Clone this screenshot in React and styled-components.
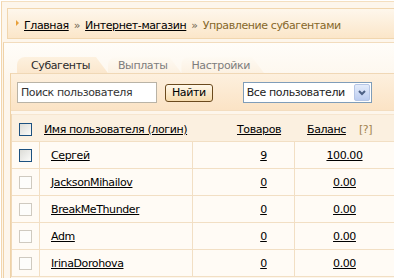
import React from "react";
import styled, { createGlobalStyle } from "styled-components";

const Global = createGlobalStyle`
  html, body { margin: 0; padding: 0; background: #fff; }
  body { font-family: "DejaVu Sans", Verdana, sans-serif; font-size: 11px; letter-spacing: -0.4px; color: #000; white-space: nowrap; }
`;

const Frame = styled.div`
  width: 394px;
  height: 278px;
  overflow: hidden;
  box-sizing: border-box;
  padding: 1px 0 0 1px;
  background: #fff;
`;

const Outer = styled.div`
  height: 100%;
  box-sizing: border-box;
  border-left: 1px solid #f2d6ae;
  border-top: 1px solid #f4dfc0;
  background: #fdf6ec;
  padding: 6px 0 0 1px;
  display: flex;
  flex-direction: column;
`;

const Breadcrumb = styled.div`
  margin-left: 4px;
  height: 31px;
  box-sizing: border-box;
  border: 1px solid #f1d6ae;
  border-right: none;
  background: linear-gradient(#fef7ec, #fbe6c9);
  display: flex;
  align-items: center;
  padding: 3px 0 0 8px;
`;

const Bullet = styled.span`
  width: 0;
  height: 0;
  border-left: 3px solid #e8a03a;
  border-top: 3px solid transparent;
  border-bottom: 3px solid transparent;
  margin-right: 5px;
  margin-top: -4px;
`;

const CrumbLink = styled.a`
  color: #000;
  text-decoration: underline;
`;

const Sep = styled.span`
  color: #6f6450;
  margin: 0 5px;
`;

const Current = styled.span`
  color: #86682a;
`;

const Panel = styled.div`
  margin-top: 3px;
  flex: 1;
  border-left: 1px solid #f0d3a8;
  border-top: 1px solid #f2dcbd;
  background: linear-gradient(#fffdf9, #fdf6ec 40px);
  padding: 14px 0 0 6px;
  display: flex;
  flex-direction: column;
`;

const Tabs = styled.div`
  display: flex;
  align-items: flex-end;
  height: 16px;
  padding-left: 7px;
`;

const Tab = styled.div`
  height: 16px;
  box-sizing: border-box;
  padding: 0 ${(p) => (p.$active ? "18px" : "14px")} 0 ${(p) => (p.$active ? "14px" : "10px")};
  display: flex;
  align-items: center;
  color: ${(p) => (p.$active ? "#2a2a2a" : "#7d7d7d")};
  background: ${(p) => (p.$active ? "linear-gradient(#fdf1df, #fbe7cd)" : "linear-gradient(#fefaf3, #fcf1e2)")};
  border-top-left-radius: 8px;
  clip-path: polygon(0 0, calc(100% - 12px) 0, 100% 100%, 0 100%);
`;

const Content = styled.div`
  flex: 1;
  border-left: 1px solid #efd2a6;
  border-top: 1px solid #f0d8b6;
  background: #fdf6ec;
  display: flex;
  flex-direction: column;
`;

const Toolbar = styled.div`
  height: 37px;
  box-sizing: border-box;
  border-bottom: 1px solid #f3ddbf;
  background: linear-gradient(#fdf0de, #fbe3c5);
  display: flex;
  align-items: center;
  padding: 1px 0 0 6px;
`;

const Search = styled.div`
  width: 140px;
  height: 21px;
  box-sizing: border-box;
  border: 1px solid #b9b3a6;
  background: #fff;
  display: flex;
  align-items: center;
  padding-left: 3px;
  color: #333;
`;

const Button = styled.div`
  margin-left: 8px;
  height: 18px;
  box-sizing: border-box;
  padding: 0 6px;
  border: 1px solid #6b4a1d;
  border-radius: 3px;
  background: linear-gradient(#fff8ea, #f7dcae);
  display: flex;
  align-items: center;
  color: #000;
`;

const Select = styled.div`
  margin-left: 30px;
  width: 129px;
  height: 21px;
  box-sizing: border-box;
  border: 1px solid #7f9db9;
  background: #fff;
  display: flex;
  align-items: center;
  justify-content: space-between;
  padding-left: 3px;
  color: #222;
`;

const SelectArrow = styled.div`
  width: 16px;
  height: 17px;
  margin-right: 1px;
  box-sizing: border-box;
  border: 1px solid #b6c6e6;
  border-radius: 2px;
  background: linear-gradient(#e4ecfb, #bccdf0);
  display: flex;
  align-items: center;
  justify-content: center;
`;

const Table = styled.div`
  margin-top: 3px;
  border-left: 1px solid #f0d9b9;
  display: grid;
  grid-template-columns: 28px 153px 102px 1fr;
`;

const Cell = styled.div`
  height: ${(p) => (p.$head ? "28px" : "27px")};
  box-sizing: border-box;
  border-bottom: 1px solid #f2dfc4;
  border-right: ${(p) => (p.$last ? "none" : "1px solid #f2dfc4")};
  border-top: ${(p) => (p.$head ? "1px solid #f6e6d0" : "none")};
  background: ${(p) => (p.$head ? "#fbf0e0" : "#fffbf5")};
  display: flex;
  align-items: center;
  justify-content: ${(p) => p.$justify || "flex-start"};
  padding-left: ${(p) => p.$pl || 0}px;
  padding-top: ${(p) => (p.$head ? 2 : 0)}px;
  gap: 13px;
`;

const HeadCell = styled(Cell).attrs({ $head: true })`
  border-right: none;
`;

const Check = styled.span`
  width: 13px;
  height: 13px;
  box-sizing: border-box;
  margin-left: 7px;
  border: 1px solid ${(p) => (p.$dim ? "#cfcac0" : "#1c5180")};
  background: ${(p) => (p.$dim ? "#fdfdfb" : "linear-gradient(135deg, #dcdcd7, #fbfbf9)")};
`;

const Link = styled.a`
  color: #000;
  text-decoration: underline;
`;

const Hint = styled.span`
  color: #a0824f;
`;

const rows = [
  { name: "Сергей", goods: "9", bal: "100.00", dim: false },
  { name: "JacksonMihailov", goods: "0", bal: "0.00", dim: true },
  { name: "BreakMeThunder", goods: "0", bal: "0.00", dim: true },
  { name: "Adm", goods: "0", bal: "0.00", dim: true },
  { name: "IrinaDorohova", goods: "0", bal: "0.00", dim: true },
];

export default function App() {
  return (
    <Frame>
      <Global />
      <Outer>
        <Breadcrumb>
          <Bullet />
          <CrumbLink>Главная</CrumbLink>
          <Sep>»</Sep>
          <CrumbLink>Интернет-магазин</CrumbLink>
          <Sep>»</Sep>
          <Current>Управление субагентами</Current>
        </Breadcrumb>
        <Panel>
          <Tabs>
            <Tab $active>Субагенты</Tab>
            <Tab>Выплаты</Tab>
            <Tab>Настройки</Tab>
          </Tabs>
          <Content>
            <Toolbar>
              <Search>Поиск пользователя</Search>
              <Button>Найти</Button>
              <Select>
                Все пользователи
                <SelectArrow>
                  <svg width="8" height="6" viewBox="0 0 8 6">
                    <path d="M1 1 L4 4 L7 1" stroke="#4d6185" strokeWidth="2" fill="none" />
                  </svg>
                </SelectArrow>
              </Select>
            </Toolbar>
            <Table>
              <HeadCell><Check /></HeadCell>
              <HeadCell $pl={4}><Link>Имя пользователя (логин)</Link></HeadCell>
              <HeadCell $pl={44}><Link>Товаров</Link></HeadCell>
              <HeadCell $pl={12} $last><Link>Баланс</Link><Hint>[?]</Hint></HeadCell>
              {rows.map((r) => (
                <React.Fragment key={r.name}>
                  <Cell><Check $dim={r.dim} /></Cell>
                  <Cell $pl={11}><Link>{r.name}</Link></Cell>
                  <Cell $pl={40} $justify="center"><Link>{r.goods}</Link></Cell>
                  <Cell $justify="center" $last><Link>{r.bal}</Link></Cell>
                </React.Fragment>
              ))}
            </Table>
          </Content>
        </Panel>
      </Outer>
    </Frame>
  );
}
